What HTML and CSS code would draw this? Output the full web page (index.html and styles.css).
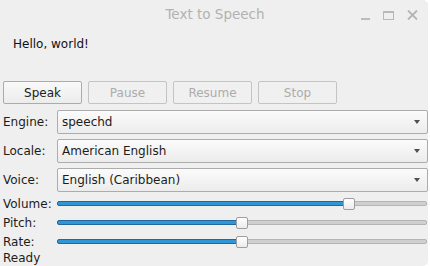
FILE: index.html
```
<!DOCTYPE html>
<html>
<head>
    <title>Text to Speech</title>
    <link rel="stylesheet" href="styles.css">
</head>
<body>
    <div id="window">
        <div class="titlebar">
            <div></div>
            <div class="title">Text to Speech</div>
            <div class="controls">
                <span class="ctl-min"></span>
                <span class="ctl-max"></span>
                <svg class="ctl-close" width="11" height="10" viewBox="0 0 11 10">
                    <path d="M1 0.5 L10 9.5 M10 0.5 L1 9.5" stroke="#b4b4b4" stroke-width="1.8" fill="none"/>
                </svg>
            </div>
        </div>

        <div class="text-area">Hello, world!</div>

        <div class="button-row">
            <div class="button">Speak</div>
            <div class="button disabled">Pause</div>
            <div class="button disabled">Resume</div>
            <div class="button disabled">Stop</div>
        </div>

        <div class="form-row">
            <div class="label">Engine:</div>
            <div class="combo"><span>speechd</span><span class="arrow"></span></div>
        </div>
        <div class="form-row">
            <div class="label">Locale:</div>
            <div class="combo"><span>American English</span><span class="arrow"></span></div>
        </div>
        <div class="form-row last">
            <div class="label">Voice:</div>
            <div class="combo"><span>English (Caribbean)</span><span class="arrow"></span></div>
        </div>

        <div class="slider-row">
            <div class="label">Volume:</div>
            <div class="slider">
                <div class="groove groove-fill" style="flex-grow: 80"></div>
                <div class="handle"></div>
                <div class="groove" style="flex-grow: 20"></div>
            </div>
        </div>
        <div class="slider-row">
            <div class="label">Pitch:</div>
            <div class="slider">
                <div class="groove groove-fill" style="flex-grow: 50"></div>
                <div class="handle"></div>
                <div class="groove" style="flex-grow: 50"></div>
            </div>
        </div>
        <div class="slider-row">
            <div class="label">Rate:</div>
            <div class="slider">
                <div class="groove groove-fill" style="flex-grow: 50"></div>
                <div class="handle"></div>
                <div class="groove" style="flex-grow: 50"></div>
            </div>
        </div>

        <div class="status">Ready</div>
    </div>
</body>
</html>
```

FILE: styles.css
```
html, body {
    margin: 0;
    padding: 0;
    background-color: #ffffff;
}

body {
    font-family: "DejaVu Sans", sans-serif;
    font-size: 12px;
    color: #1c1c1c;
}

#window {
    width: 428px;
    height: 266px;
    background-color: #efefef;
    border-radius: 0 5px 5px 0;
    overflow: hidden;
}

.titlebar {
    height: 28px;
    width: 430px;
    display: grid;
    grid-template-columns: 1fr auto 1fr;
    align-items: center;
}

.title {
    font-size: 13.5px;
    color: #b2b2b2;
}

.controls {
    display: flex;
    align-items: center;
    justify-content: flex-end;
    gap: 13px;
    padding-right: 12px;
    padding-top: 1px;
}

.ctl-min {
    width: 9px;
    height: 2px;
    background-color: #bcbcbc;
    margin-top: 9px;
}

.ctl-max {
    width: 9px;
    height: 6px;
    border: 1.5px solid #b8b8b8;
    border-top-width: 2px;
    margin-top: 1px;
}

.text-area {
    height: 53px;
    padding-left: 13px;
    padding-top: 9px;
    box-sizing: border-box;
    line-height: 14px;
    color: #111;
}

.button-row {
    display: flex;
    gap: 6px;
    margin-left: 3px;
    margin-bottom: 6px;
}

.button {
    width: 77px;
    height: 21px;
    border: 1px solid #ababab;
    border-radius: 2px;
    background: linear-gradient(#f9f9f9, #ececec);
    display: flex;
    align-items: center;
    justify-content: center;
    color: #1c1c1c;
}

.button.disabled {
    color: #acacac;
    border-color: #c4c4c4;
    background: #f0f0f0;
}

.form-row {
    display: flex;
    align-items: center;
    margin-left: 3px;
    margin-bottom: 5px;
}

.form-row.last {
    margin-bottom: 2px;
}

.label {
    width: 54px;
    flex-shrink: 0;
}

.combo {
    width: 360px;
    height: 22px;
    border: 1px solid #acacac;
    border-radius: 2px;
    background: linear-gradient(#fbfbfb, #ececec);
    display: flex;
    align-items: center;
    justify-content: space-between;
    padding-left: 4px;
    padding-right: 7px;
}

.arrow {
    width: 0;
    height: 0;
    border-left: 3.5px solid transparent;
    border-right: 3.5px solid transparent;
    border-top: 4px solid #505050;
}

.slider-row {
    display: flex;
    align-items: center;
    height: 19px;
    margin-left: 3px;
}

.slider {
    display: flex;
    align-items: center;
    width: 370px;
}

.groove {
    height: 3px;
    border: 1px solid #b4b4b4;
    background-color: #cfcfcf;
    border-radius: 0 2px 2px 0;
    margin-left: -1px;
}

.groove-fill {
    background-color: #3096d6;
    border-color: #25679a;
    border-radius: 2px 0 0 2px;
    margin-left: 0;
    margin-right: -1px;
}

.handle {
    width: 10px;
    height: 10px;
    border: 1px solid #9e9e9e;
    border-radius: 2px;
    background: linear-gradient(#ffffff, #ebebeb);
    flex-shrink: 0;
    position: relative;
}

.status {
    margin-left: 3px;
    line-height: 14px;
}
```
